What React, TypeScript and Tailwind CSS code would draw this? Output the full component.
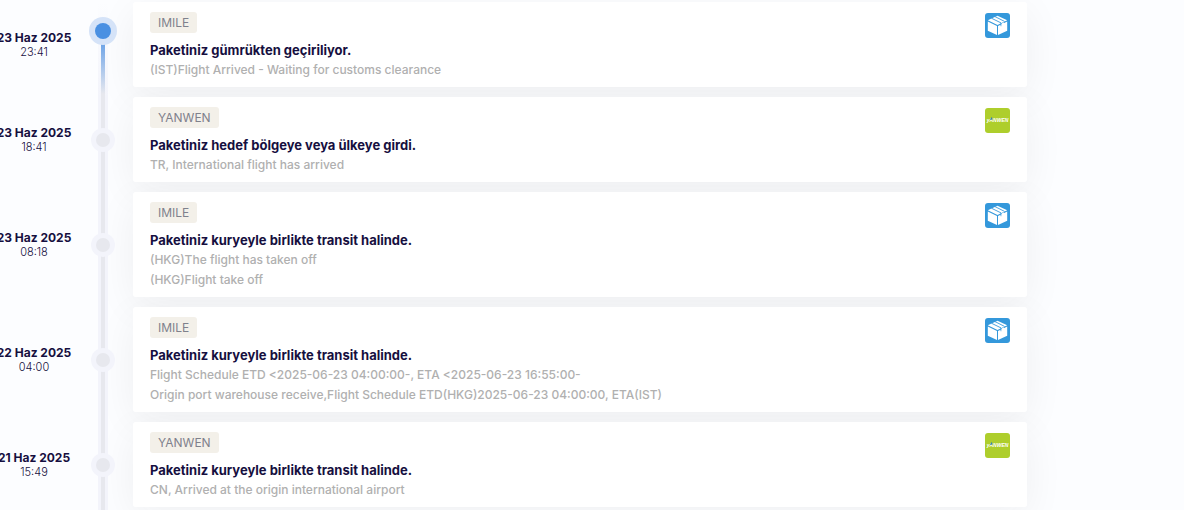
import clsx from "clsx";

type Carrier = "IMILE" | "YANWEN";

interface TrackingEvent {
  date: string;
  time: string;
  carrier: Carrier;
  title: string;
  details: string[];
}

const events: TrackingEvent[] = [
  {
    date: "23 Haz 2025",
    time: "23:41",
    carrier: "IMILE",
    title: "Paketiniz gümrükten geçiriliyor.",
    details: ["(IST)Flight Arrived - Waiting for customs clearance"],
  },
  {
    date: "23 Haz 2025",
    time: "18:41",
    carrier: "YANWEN",
    title: "Paketiniz hedef bölgeye veya ülkeye girdi.",
    details: ["TR, International flight has arrived"],
  },
  {
    date: "23 Haz 2025",
    time: "08:18",
    carrier: "IMILE",
    title: "Paketiniz kuryeyle birlikte transit halinde.",
    details: ["(HKG)The flight has taken off", "(HKG)Flight take off"],
  },
  {
    date: "22 Haz 2025",
    time: "04:00",
    carrier: "IMILE",
    title: "Paketiniz kuryeyle birlikte transit halinde.",
    details: [
      "Flight Schedule ETD <2025-06-23 04:00:00-, ETA <2025-06-23 16:55:00-",
      "Origin port warehouse receive,Flight Schedule ETD(HKG)2025-06-23 04:00:00, ETA(IST)",
    ],
  },
  {
    date: "21 Haz 2025",
    time: "15:49",
    carrier: "YANWEN",
    title: "Paketiniz kuryeyle birlikte transit halinde.",
    details: ["CN, Arrived at the origin international airport"],
  },
];

function CarrierLogo({ carrier }: { carrier: Carrier }) {
  if (carrier === "YANWEN") {
    return (
      <svg viewBox="0 0 25 25" className="size-[25px] shrink-0 rounded-[3px]" aria-hidden="true">
        <rect width="25" height="25" fill="#aece2c" />
        <text
          x="12.5"
          y="14"
          textAnchor="middle"
          fontSize="5"
          fontWeight="700"
          fontStyle="italic"
          fontFamily="Liberation Sans, sans-serif"
          fill="#fff"
        >
          yANWEN
        </text>
        <path d="M5 12 6.8 8.8l.8 2.8z" fill="#2f7fb8" />
      </svg>
    );
  }

  return (
    <svg viewBox="0 0 25 25" className="size-[25px] shrink-0 rounded-[3px]" aria-hidden="true">
      <rect width="25" height="25" fill="#3498db" />
      <g fill="#fff">
        <path d="M12.5 2.7 22.2 7.3l-9.7 4.7L2.8 7.3z" />
        <path d="M2.8 8.5 12 12.9v9.2l-9.2-4.3z" />
        <path d="M22.2 8.5 13 12.9v9.2l9.2-4.3z" />
      </g>
      {/* Tape */}
      <path d="M6.4 5.2 16 9.9v3.3M10 3.6l9.5 4.8" fill="none" stroke="#3498db" strokeWidth=".9" />
      <path d="m16.6 10.4 2.4-1.2v3l-2.4 1.2z" fill="#fff" />
    </svg>
  );
}

function TimelineRail({ active }: { active: boolean }) {
  return (
    <div className="flex w-7 shrink-0 justify-center self-stretch">
      {/* The rail runs through the gap below each row */}
      <div
        className={clsx(
          "relative -mb-[10px] w-[10px]",
          active ? "bg-linear-to-b from-[#fcfdff] to-[#f3f4fb]" : "bg-[#f3f4fb]"
        )}
      >
        <div
          className={clsx(
            "absolute inset-x-[3px] bottom-0 bg-[#e7e8ee]",
            active ? "top-7" : "top-0"
          )}
        />
        {active && (
          <div className="absolute inset-x-[3px] top-7 h-16 bg-linear-to-b from-[#4a90e2] to-[#e7e8ee]" />
        )}
      </div>
    </div>
  );
}

function TimelineDot({ active }: { active: boolean }) {
  return (
    <span
      className={clsx(
        "absolute left-1/2 flex -translate-x-1/2 items-center justify-center rounded-full",
        active
          ? "top-[15px] size-7 bg-[#d5e3f8]"
          : "top-1/2 size-6 -translate-y-1/2 bg-[#f3f4fb]"
      )}
    >
      <span
        className={clsx(
          "rounded-full",
          active ? "size-4 bg-[#4a90e2]" : "size-[14px] bg-[#e7e8ee]"
        )}
      />
    </span>
  );
}

function TimelineRow({ event, active }: { event: TrackingEvent; active: boolean }) {
  return (
    <li className="flex items-center">
      {/* Date */}
      <div className="flex w-[68px] shrink-0 flex-col items-center whitespace-nowrap leading-[15px]">
        <span className="text-[12px] font-bold">{event.date}</span>
        <time className="text-[11px] font-light">{event.time}</time>
      </div>

      {/* Rail */}
      <div className="relative ml-[21px] flex self-stretch">
        <TimelineRail active={active} />
        <TimelineDot active={active} />
      </div>

      {/* Card */}
      <article className="relative ml-4 flex min-w-0 flex-1 items-start justify-between rounded-[3px] bg-white px-[17px] pb-[7px] pt-[10px] before:absolute before:inset-0 before:-z-10 before:rounded-[3px] before:shadow-[0_10px_40px_rgba(30,30,30,0.06)]">
        <div className="min-w-0">
          <p className="w-fit rounded-[3px] bg-[#f3f0e9] px-2 text-[12px] leading-[21px] text-[#7f818c]">
            {event.carrier}
          </p>
          <h3 className="mt-[7px] text-[13px] font-bold leading-5">{event.title}</h3>
          {event.details.map((line) => (
            <p key={line} className="text-[12px] font-medium leading-5 text-[#b0b0b0]">
              {line}
            </p>
          ))}
        </div>
        <div className="mt-px">
          <CarrierLogo carrier={event.carrier} />
        </div>
      </article>
    </li>
  );
}

export default function App() {
  return (
    <main className="min-h-screen overflow-hidden bg-[#fcfdff] font-['Inter',sans-serif] text-[#160f40]">
      <ol className="isolate mr-[157px] flex flex-col gap-[10px] pt-0.5">
        {events.map((event, index) => (
          <TimelineRow key={`${event.date} ${event.time}`} event={event} active={index === 0} />
        ))}
      </ol>
    </main>
  );
}
